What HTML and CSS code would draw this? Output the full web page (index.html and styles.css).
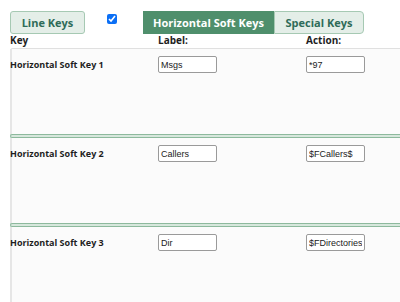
FILE: index.html
```html
<!DOCTYPE html>
<html lang="en">
<head>
  <meta charset="UTF-8">
  <title>Soft Keys</title>
  <link rel="stylesheet" href="styles.css">
</head>
<body>
  <!-- tabs -->
  <div class="tabs">
    <button type="button" class="tab tab-line">Line Keys</button>
    <input type="checkbox" class="toggle" checked>
    <div class="tab-group">
      <button type="button" class="tab active">Horizontal Soft Keys</button>
      <button type="button" class="tab tab-last">Special Keys</button>
    </div>
  </div>

  <!-- column headings -->
  <div class="cols head">
    <span>Key</span>
    <span>Label:</span>
    <span>Action:</span>
  </div>

  <div class="list">
    <div class="cols row">
      <span class="key">Horizontal Soft Key 1</span>
      <input type="text" value="Msgs">
      <input type="text" value="*97">
    </div>
    <div class="sep"></div>
    <div class="cols row">
      <span class="key">Horizontal Soft Key 2</span>
      <input type="text" value="Callers">
      <input type="text" value="$FCallers$">
    </div>
    <div class="sep"></div>
    <div class="cols row">
      <span class="key">Horizontal Soft Key 3</span>
      <input type="text" value="Dir">
      <input type="text" value="$FDirectories">
    </div>
  </div>
</body>
</html>
```
FILE: styles.css
```css
:root {
  --green:       #4f8f6c;
  --green-light: #e4eee8;
  --green-line:  #a6c9b3;
  --green-text:  #2f6b58;
  --text:        #1e1e1e;
}
* { box-sizing: border-box; }
body {
  margin: 0;
  font-family: "Open Sans", sans-serif;
  color: var(--text);
  background: #fff;
  overflow: hidden;
}
/* tabs */
.tabs {
  display: flex;
  align-items: center;
  padding: 11px 0 0 10px;
  height: 34px;
}
.tab {
  font-family: "Open Sans", sans-serif;
  font-weight: bold;
  font-size: 11px;
  height: 23px;
  padding: 0;
  white-space: nowrap;
  text-align: center;
  border: 1px solid var(--green-line);
  background: var(--green-light);
  color: var(--green-text);
  cursor: pointer;
}
.tab-line {
  width: 75px;
  border-radius: 3px;
}
.toggle {
  width: 10px;
  height: 10px;
  margin: 0 0 7px 22px;
  accent-color: #0b6ff5;
}
.tab-group {
  display: flex;
  margin-left: 26px;
}
.tab-group .tab {
  border-radius: 0;
}
.tab.active {
  background: var(--green);
  border-color: var(--green);
  color: #fff;
  width: 131px;
}
.tab.tab-last {
  width: 90px;
  border-radius: 0 4px 4px 0;
}
/* columns */
.cols {
  display: grid;
  grid-template-columns: 148px 148px 1fr;
}
.head {
  margin-left: 10px;
  height: 14px;
  font-size: 10px;
  font-weight: bold;
  line-height: 13px;
}
.list {
  margin-left: 10px;
  border-top: 1px solid #e0e0e0;
  border-top-left-radius: 3px;
}
.row {
  height: 85px;
  padding-top: 7px;
  align-items: start;
  border-left: 2px solid #e6e6e6;
  background: #fbfbfb;
}
.key {
  font-size: 9px;
  font-weight: bold;
  padding: 2px 0 0 0;
  margin-left: -2px;
}
.row input {
  width: 59px;
  height: 17px;
  padding: 0 2px;
  font-family: "Liberation Sans", Arial, sans-serif;
  font-size: 9px;
  color: #222;
  border: 1px solid #9a9a9a;
  border-radius: 2px;
  background: #fff;
  margin-left: -2px;
}
.sep {
  height: 4px;
  border: 1px solid #8db99d;
  border-right: none;
  background: #d6e7dc;
  border-radius: 3px 0 0 3px;
}
```
